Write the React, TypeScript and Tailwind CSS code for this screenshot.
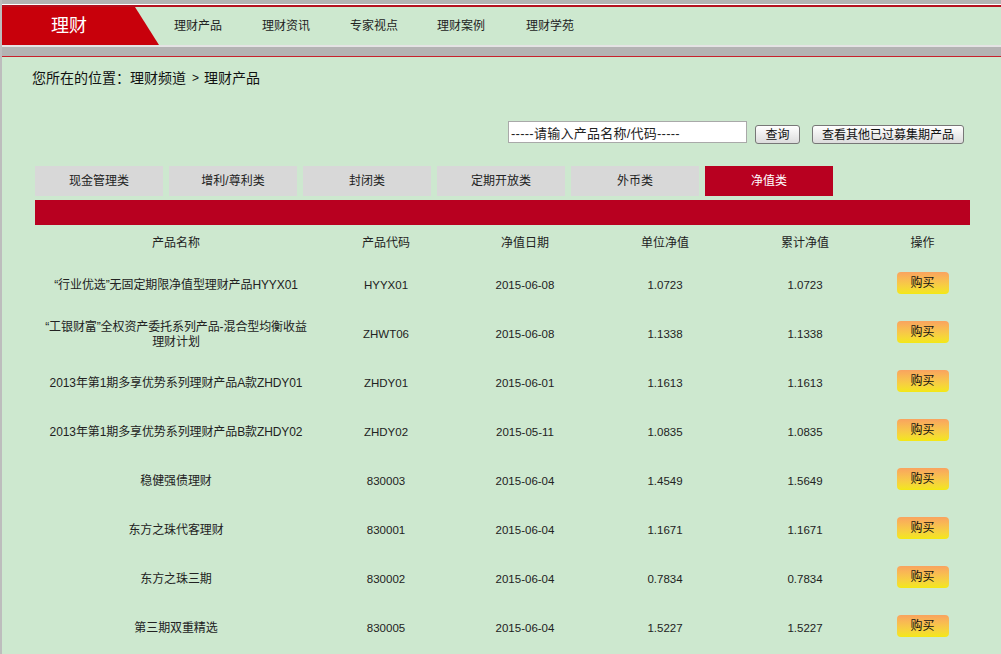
const tabs = ['现金管理类', '增利/尊利类', '封闭类', '定期开放类', '外币类', '净值类'];
const nav = [
  ['理财产品', 'w-[88px]'],
  ['理财资讯', 'w-[88px]'],
  ['专家视点', 'w-[87px]'],
  ['理财案例', 'w-[89px]'],
  ['理财学苑', 'w-[88px]'],
];
const rows = [
  ['“行业优选”无固定期限净值型理财产品HYYX01', 'HYYX01', '2015-06-08', '1.0723', '1.0723'],
  ['“工银财富”全权资产委托系列产品-混合型均衡收益理财计划', 'ZHWT06', '2015-06-08', '1.1338', '1.1338'],
  ['2013年第1期多享优势系列理财产品A款ZHDY01', 'ZHDY01', '2015-06-01', '1.1613', '1.1613'],
  ['2013年第1期多享优势系列理财产品B款ZHDY02', 'ZHDY02', '2015-05-11', '1.0835', '1.0835'],
  ['稳健强债理财', '830003', '2015-06-04', '1.4549', '1.5649'],
  ['东方之珠代客理财', '830001', '2015-06-04', '1.1671', '1.1671'],
  ['东方之珠三期', '830002', '2015-06-04', '0.7834', '0.7834'],
  ['第三期双重精选', '830005', '2015-06-04', '1.5227', '1.5227'],
];
const cols = 'grid grid-cols-[282px_138px_140px_140px_140px_95px] items-center text-center';

export default function App() {
  return (
    <div className="h-[654px] w-[1001px] overflow-hidden border-l-[2px] border-[#bdbdbd] bg-[#cde8cf] text-[12px] text-[#222] font-['Liberation_Sans','Noto_Sans_CJK_SC',sans-serif]">
      <div className="h-[4px] bg-[#b3b3b3]" />
      <div className="h-[1px] bg-white" />
      <div className="h-[2px] bg-[#b5101f]" />
      <nav className="flex h-[38px]">
        <div className="flex h-[38px] w-[157px] items-center bg-[#c8000b] [clip-path:polygon(0_0,133px_0,157px_100%,0_100%)]">
          <span className="ml-[49px] text-[18px] leading-none text-white">理财</span>
        </div>
        <div className="ml-[-1px] flex items-center pl-[16px]">
          {nav.map(([label, w]) => (
            <a key={label} className={`${w} shrink-0 text-[#222]`}>{label}</a>
          ))}
        </div>
      </nav>
      <div className="h-[2px] bg-[#e4e4e4]" />
      <div className="h-[9px] bg-[#b3b3b3]" />
      <div className="h-[1px] bg-[#c8202c]" />
      <div className="flex pl-[30px] pt-[12px] text-[14px] leading-[18px] text-[#111]">
        <span>您所在的位置：理财频道</span>
        <span className="ml-[6px] mr-[5px] text-[12px]">&gt;</span>
        <span>理财产品</span>
      </div>

      <div className="mt-[34px] flex h-[25px] items-start pl-[506px]">
        <input
          readOnly
          value="-----请输入产品名称/代码-----"
          className="h-[22px] w-[239px] border border-[#a9a9a9] bg-white px-[2px] text-[13px] tracking-[0.25px] text-[#222] outline-none"
        />
        <button className="ml-[8px] mt-[4px] h-[19px] w-[45px] rounded-[3px] border border-[#777] bg-gradient-to-b from-white to-[#dcdcdc] text-[12px] leading-none text-[#111]">查询</button>
        <button className="ml-[12px] mt-[4px] h-[19px] w-[152px] rounded-[3px] border border-[#777] bg-gradient-to-b from-white to-[#dcdcdc] text-[12px] leading-none text-[#111]">查看其他已过募集期产品</button>
      </div>

      <div className="mt-[20px] flex gap-[6px] pl-[33px]">
        {tabs.map((t, i) => (
          <div
            key={t}
            className={i === 5
              ? 'flex h-[30px] w-[128px] items-center justify-center bg-[#b80020] text-white'
              : 'flex h-[30px] w-[128px] items-center justify-center bg-[#d8d8d8] text-[#222]'}
          >
            {t}
          </div>
        ))}
      </div>

      <div className="ml-[33px] mt-[4px] w-[935px]">
        <div className="h-[25px] bg-[#b80020]" />
        <div className={`${cols} h-[36px]`}>
          <div>产品名称</div>
          <div>产品代码</div>
          <div>净值日期</div>
          <div>单位净值</div>
          <div>累计净值</div>
          <div>操作</div>
        </div>
        {rows.map((r) => (
          <div key={r[1]} className={`${cols} h-[49px]`}>
            <div className="px-[5px] leading-[15px] tracking-[-0.1px]">{r[0]}</div>
            <div className="text-[11.5px]">{r[1]}</div>
            <div className="text-[11.5px]">{r[2]}</div>
            <div className="text-[11.5px]">{r[3]}</div>
            <div className="text-[11.5px]">{r[4]}</div>
            <div className="flex justify-center pb-[5px]">
              <button className="h-[22px] w-[52px] rounded-[4px] bg-gradient-to-b from-[#f9a35f] to-[#f3e812] text-[12px] leading-none text-[#111]">购买</button>
            </div>
          </div>
        ))}
      </div>
    </div>
  );
}
